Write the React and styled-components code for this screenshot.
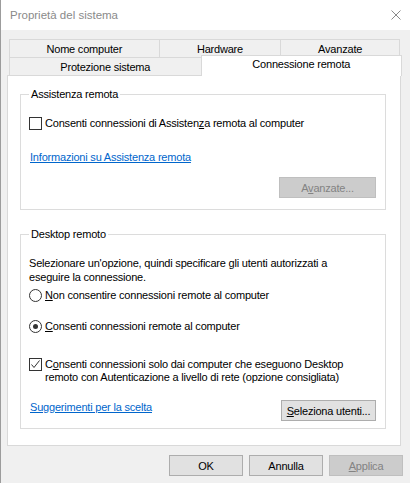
import React from 'react';
import styled, { createGlobalStyle } from 'styled-components';

const GlobalStyle = createGlobalStyle`
    html, body {
        margin: 0;
        padding: 0;
        background: #f0f0f0;
    }
    body {
        font-family: "Liberation Sans", Arial, sans-serif;
        font-size: 11px;
        color: #000;
    }
`;

const Window = styled.div`
    width: 410px;
    height: 483px;
    box-sizing: border-box;
    background: #f0f0f0;
    border-left: 1px solid #9c9c9c;
    display: flex;
    flex-direction: column;
    letter-spacing: -0.2px;
`;

const TitleBar = styled.header`
    height: 30px;
    flex-shrink: 0;
    background: #fff;
    display: flex;
    align-items: center;
    justify-content: space-between;
    padding: 0 9px 0 9px;
    color: #8a8a8a;
    font-size: 11.5px;
    letter-spacing: 0;
`;

const Body = styled.div`
    padding: 9px 9px 0 6px;
`;

const TabStrip = styled.div`
    display: flex;
    flex-direction: column;
    padding: 0 1px 0 2px;
`;

const TabRow = styled.div`
    display: flex;
    height: 18px;
`;

const Tab = styled.div`
    box-sizing: border-box;
    width: ${p => p.$w}px;
    height: ${p => (p.$active ? 21 : 18)}px;
    margin: ${p => (p.$active ? '-2px -2px -1px 0' : '0')};
    background: ${p => (p.$active ? '#fff' : '#f0f0f0')};
    border: 1px solid #d9d9d9;
    border-bottom: none;
    display: flex;
    justify-content: center;
    padding-top: ${p => (p.$active ? 2 : 3)}px;
    line-height: 13px;
    position: relative;
    z-index: ${p => (p.$active ? 1 : 0)};
    & + & {
        margin-left: -1px;
    }
`;

const Panel = styled.section`
    background: #fff;
    border: 1px solid #d9d9d9;
    padding: 18px 14px 16px 12px;
    display: flex;
    flex-direction: column;
    gap: 24px;
`;

const Group = styled.div`
    position: relative;
    border: 1px solid #dcdcdc;
    padding: ${p => p.$pad};
    display: flex;
    flex-direction: column;
`;

const Legend = styled.span`
    position: absolute;
    top: -8px;
    left: 8px;
    padding: 0 2px;
    background: #fff;
    line-height: 15px;
`;

const Row = styled.div`
    display: flex;
    align-items: ${p => (p.$top ? 'flex-start' : 'center')};
    gap: 3px;
    margin-top: ${p => p.$mt || 0}px;
    line-height: ${p => p.$lh || 14}px;
`;

const Box = styled.span`
    flex-shrink: 0;
    box-sizing: border-box;
    width: 13px;
    height: 13px;
    border: 1px solid #333;
    background: #fff;
    display: flex;
    align-items: center;
    justify-content: center;
`;

const Radio = styled(Box)`
    border-radius: 50%;
    &::after {
        content: '';
        display: ${p => (p.$checked ? 'block' : 'none')};
        width: 5px;
        height: 5px;
        border-radius: 50%;
        background: #333;
    }
`;

const Text = styled.p`
    margin: ${p => p.$mt || 0}px 0 0;
    line-height: 14px;
`;

const Link = styled.a`
    color: #0066cc;
    text-decoration: underline;
    cursor: pointer;
    line-height: 15px;
    margin-top: ${p => p.$mt || 0}px;
    padding-left: 1px;
    align-self: flex-start;
`;

const Bottom = styled.div`
    display: flex;
    justify-content: space-between;
    align-items: center;
    margin-top: ${p => p.$mt || 0}px;
`;

const Btn = styled.button`
    box-sizing: border-box;
    width: ${p => p.$w}px;
    height: 21px;
    padding: 0;
    font: inherit;
    letter-spacing: inherit;
    background: ${p => (p.disabled ? '#cccccc' : '#e1e1e1')};
    border: 1px solid ${p => (p.disabled ? '#bfbfbf' : '#adadad')};
    color: ${p => (p.disabled ? '#838383' : '#000')};
    align-self: ${p => p.$self || 'auto'};
    margin-top: ${p => p.$mt || 0}px;
`;

const Footer = styled.footer`
    display: flex;
    justify-content: flex-end;
    gap: 6px;
    padding: 9px 7px 0 0;
`;

const Close = () => (
    <svg width="10" height="10" viewBox="0 0 10 10">
        <path d="M0.5 0.5 L9.5 9.5 M9.5 0.5 L0.5 9.5" stroke="#8a8a8a" strokeWidth="1" fill="none" />
    </svg>
);

const Check = () => (
    <svg width="11" height="11" viewBox="0 0 11 11">
        <polyline points="1.5,5.5 4,8.5 9.5,1.5" stroke="#333" strokeWidth="1" fill="none" />
    </svg>
);

const App = () => (
    <>
        <GlobalStyle />
        <Window>
            <TitleBar>
                <span>Proprietà del sistema</span>
                <Close />
            </TitleBar>
            <Body>
                <TabStrip>
                    <TabRow>
                        <Tab $w={151}>Nome computer</Tab>
                        <Tab $w={123}>Hardware</Tab>
                        <Tab $w={120}>Avanzate</Tab>
                    </TabRow>
                    <TabRow>
                        <Tab $w={193}>Protezione sistema</Tab>
                        <Tab $w={202} $active>Connessione remota</Tab>
                    </TabRow>
                </TabStrip>
                <Panel>
                    <Group $pad="22px 9px 11px 8px">
                        <Legend>Assistenza remota</Legend>
                        <Row $lh={13}>
                            <Box />
                            <span>Consenti connessioni di Assisten<u>z</u>a remota al computer</span>
                        </Row>
                        <Link $mt={20}>Informazioni su Assistenza remota</Link>
                        <Btn $w={97} $self="flex-end" $mt={12} disabled>
                            A<u>v</u>anzate...
                        </Btn>
                    </Group>
                    <Group $pad="21px 9px 7px 8px">
                        <Legend>Desktop remoto</Legend>
                        <Text>
                            Selezionare un'opzione, quindi specificare gli utenti autorizzati a
                            <br />
                            eseguire la connessione.
                        </Text>
                        <Row $mt={4}>
                            <Radio />
                            <span><u>N</u>on consentire connessioni remote al computer</span>
                        </Row>
                        <Row $mt={17}>
                            <Radio $checked />
                            <span><u>C</u>onsenti connessioni remote al computer</span>
                        </Row>
                        <Row $mt={25} $top $lh={13}>
                            <Box><Check /></Box>
                            <span>
                                C<u>o</u>nsenti connessioni solo dai computer che eseguono Desktop
                                <br />
                                remoto con Autenticazione a livello di rete (opzione consigliata)
                            </span>
                        </Row>
                        <Bottom $mt={16}>
                            <Link>Suggerimenti per la scelta</Link>
                            <Btn $w={95}><u>S</u>eleziona utenti...</Btn>
                        </Bottom>
                    </Group>
                </Panel>
            </Body>
            <Footer>
                <Btn $w={74}>OK</Btn>
                <Btn $w={74}>Annulla</Btn>
                <Btn $w={74} disabled><u>A</u>pplica</Btn>
            </Footer>
        </Window>
    </>
);

export default App;
